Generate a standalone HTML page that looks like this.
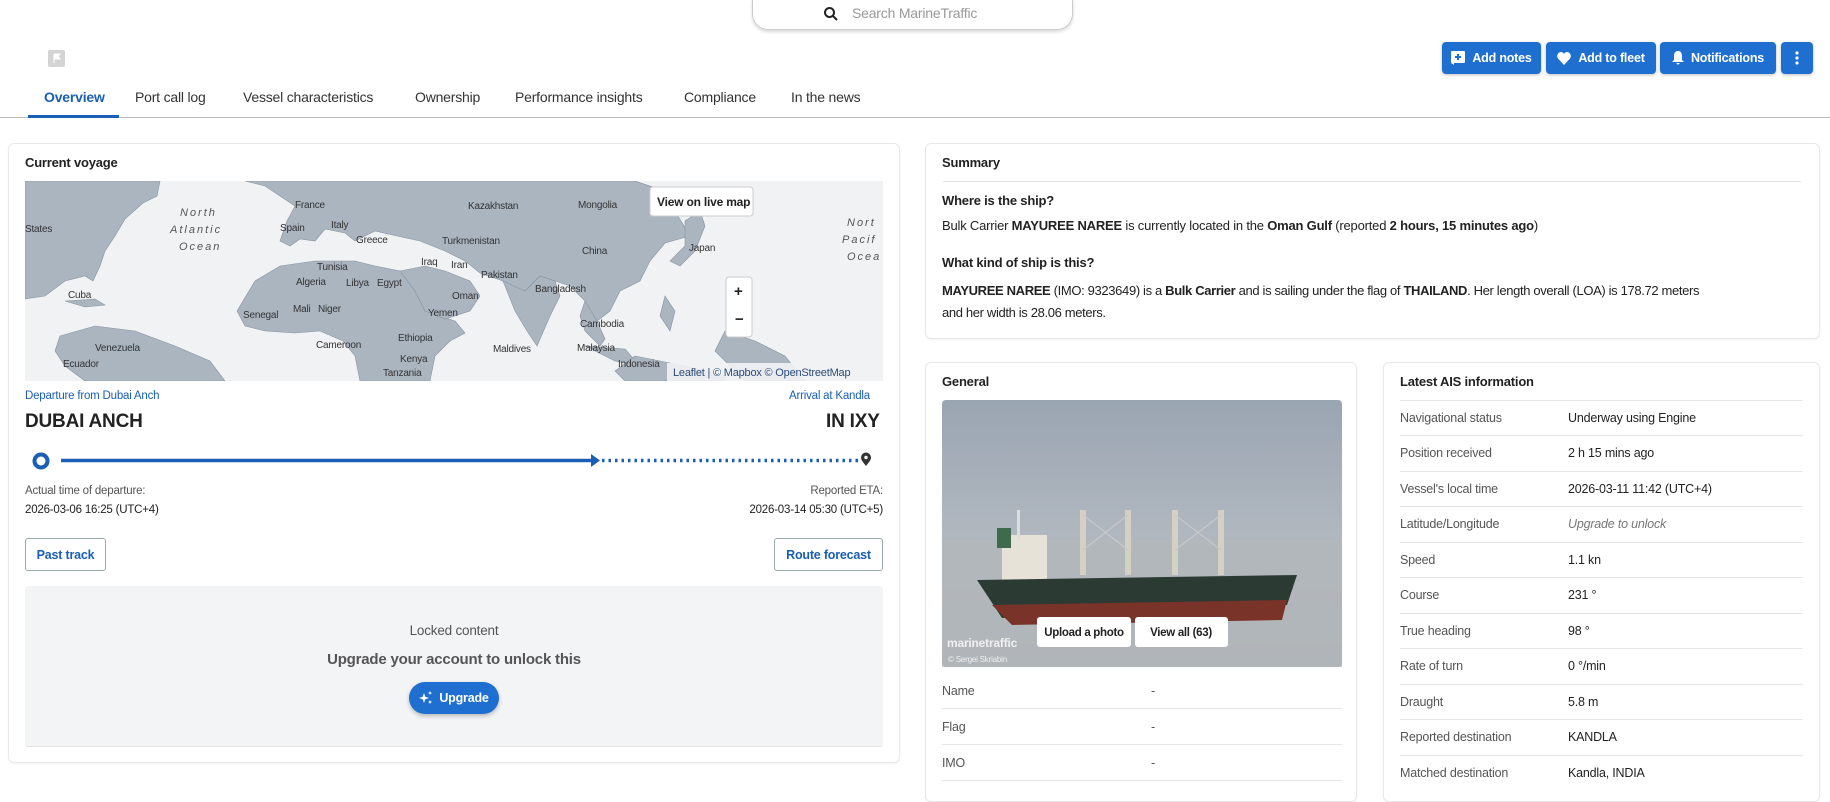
<!DOCTYPE html>
<html><head><meta charset="utf-8"><style>
*{box-sizing:border-box;margin:0;padding:0}
body{width:1830px;height:789px;overflow:hidden;background:#fff;font-family:"Liberation Sans",Arial,sans-serif;color:#222;position:relative;font-size:13px;letter-spacing:-0.2px}
.a{position:absolute}
.search{left:752px;top:-2px;width:321px;height:32px;border:1px solid #ccc;border-top:none;border-radius:0 0 16px 16px;box-shadow:0 2px 3px rgba(0,0,0,.15)}
.btn{position:absolute;top:42px;height:32px;background:#1f6fd1;border-radius:4px;color:#fff;font-weight:bold;font-size:12.5px;display:flex;align-items:center;justify-content:center;gap:7px;box-shadow:0 1px 3px rgba(0,0,0,.25)}
.tab{position:absolute;top:89px;font-size:14px;color:#333}
.card{position:absolute;border:1px solid #e8e8e8;border-radius:6px;box-shadow:0 1px 2px rgba(0,0,0,.05)}
.h{font-weight:bold;font-size:13px;color:#222}
.row{position:absolute;left:1400px;width:403px;height:36px;border-top:1px solid #e6e6e6;font-size:12.5px}
.row span{position:absolute;top:10px}
.row .l{left:0;color:#555}.row .v{left:168px;color:#222}
.grow{position:absolute;left:942px;width:400px;height:36px;border-bottom:1px solid #e6e6e6;font-size:12.5px;color:#555}
.ob{position:absolute;border:1px solid #9aa;border-radius:3px;background:#fff;color:#1a5fb4;font-weight:bold;font-size:12.5px;display:flex;align-items:center;justify-content:center}
</style></head><body>
<div class="a search"></div>
<svg class="a" style="left:823px;top:6px" width="16" height="16" viewBox="0 0 16 16"><circle cx="6.5" cy="6.5" r="4.5" fill="none" stroke="#222" stroke-width="2"/><path d="M10 10l4 4" stroke="#222" stroke-width="2"/></svg>
<div class="a" style="left:852px;top:5px;font-size:14px;color:#999">Search MarineTraffic</div>
<div class="a" style="left:48px;top:50px;width:17px;height:17px;background:#d4d4d4;border-radius:2px"></div>
<svg class="a" style="left:52px;top:53px" width="10" height="10"><path d="M2 1v9M2 1h6l-2 2.5 2 2.5H2" fill="#fff" stroke="#fff"/></svg>

<div class="btn" style="left:1442px;width:99px"><svg width="14" height="14"><rect x="0" y="0" width="14" height="12" rx="1" fill="#fff"/><path d="M0 12l3 2v-2" fill="#fff"/><path d="M7 3v6M4 6h6" stroke="#1f6fd1" stroke-width="2"/></svg>Add notes</div>
<div class="btn" style="left:1546px;width:110px"><svg width="14" height="13" viewBox="0 0 14 13"><path d="M7 13L1 6.5C-1 4 1 0 4 0c1.5 0 2.5 1 3 2 .5-1 1.5-2 3-2 3 0 5 4 3 6.5z" fill="#fff"/></svg>Add to fleet</div>
<div class="btn" style="left:1660px;width:116px"><svg width="12" height="14" viewBox="0 0 12 14"><path d="M6 0c3 0 4 2.5 4 5v4l2 2H0l2-2V5c0-2.5 1-5 4-5zM4.5 12h3a1.5 1.5 0 01-3 0z" fill="#fff"/></svg>Notifications</div>
<div class="btn" style="left:1781px;width:32px"><svg width="4" height="14"><circle cx="2" cy="2" r="1.6" fill="#fff"/><circle cx="2" cy="7" r="1.6" fill="#fff"/><circle cx="2" cy="12" r="1.6" fill="#fff"/></svg></div>

<div class="tab" style="left:44px;color:#1a5fb4;font-weight:bold">Overview</div>
<div class="tab" style="left:135px">Port call log</div>
<div class="tab" style="left:243px">Vessel characteristics</div>
<div class="tab" style="left:415px">Ownership</div>
<div class="tab" style="left:515px">Performance insights</div>
<div class="tab" style="left:684px">Compliance</div>
<div class="tab" style="left:791px">In the news</div>
<div class="a" style="left:0;top:117px;width:1830px;height:1px;background:#bbb"></div>
<div class="a" style="left:28px;top:115px;width:91px;height:3px;background:#1a5fb4"></div>

<!-- Current voyage -->
<div class="card" style="left:8px;top:143px;width:892px;height:620px"></div>
<div class="a h" style="left:25px;top:155px">Current voyage</div>
<svg class="a" style="left:25px;top:181px" width="858" height="200" viewBox="0 0 858 200">
<rect width="858" height="200" fill="#f1f2f4"/>
<g fill="#aab5c0" stroke="#8794a0" stroke-width=".6">
<path d="M0 0 L135 0 L132 15 L118 22 L100 38 L90 55 L80 70 L75 85 L68 100 L60 95 L40 100 L20 115 L0 118Z"/>
<path d="M40 120 L70 118 L80 124 L60 126Z"/>
<path d="M35 155 L70 145 L110 150 L150 165 L185 180 L200 200 L60 200 L40 185 L30 170Z"/>
<path d="M220 0 L610 0 L640 10 L650 30 L665 55 L640 62 L625 80 L615 100 L595 110 L585 130 L572 140 L560 120 L545 105 L530 100 L515 95 L500 110 L488 112 L478 100 L455 92 L440 80 L420 70 L395 60 L372 55 L350 50 L330 60 L320 52 L300 48 L290 60 L275 58 L265 65 L255 60 L262 40 L270 25 L255 15 L240 5Z"/>
<path d="M212 130 L230 100 L255 85 L290 80 L330 80 L350 85 L375 90 L390 110 L400 130 L430 140 L440 152 L425 160 L410 175 L405 200 L335 200 L330 175 L318 160 L295 150 L270 152 L240 150 L220 145Z"/>
<path d="M375 90 L400 85 L420 90 L445 100 L455 115 L445 130 L420 138 L400 130 L390 110Z"/>
<path d="M478 100 L500 110 L515 95 L530 100 L535 115 L525 135 L512 165 L502 150 L490 130Z"/>
<path d="M560 120 L572 140 L580 158 L575 165 L560 150 L555 135Z"/>
<path d="M560 165 L600 168 L615 185 L590 180Z"/>
<path d="M610 175 L660 185 L700 195 L700 200 L600 200 L590 190Z"/>
<path d="M660 40 L675 30 L680 45 L670 70 L655 85 L645 80 L660 65Z"/>
<path d="M700 150 L730 160 L760 175 L780 200 L720 200 L690 170Z"/>
<path d="M640 115 L650 130 L645 150 L635 135Z"/>
</g>
<g fill="#fff" stroke="#ccc"><rect x="625" y="6" width="103" height="29" rx="3"/><rect x="701" y="96" width="26" height="60" rx="3"/></g>
<text x="632" y="25" font-size="12" font-weight="bold" fill="#222" font-family="Liberation Sans">View on live map</text>
<text x="709" y="115" font-size="15" font-weight="bold" fill="#222">+</text><text x="710" y="143" font-size="15" font-weight="bold" fill="#222">−</text>
<rect x="642" y="182" width="216" height="18" fill="#f1f2f4" opacity=".9"/>
<text x="648" y="195" font-size="11" fill="#2b4a7a" font-family="Liberation Sans">Leaflet | © Mapbox © OpenStreetMap</text>
<g font-size="10" fill="#333" font-family="Liberation Sans">
<text x="270" y="27">France</text><text x="443" y="28">Kazakhstan</text><text x="553" y="27">Mongolia</text><text x="255" y="50">Spain</text><text x="306" y="47">Italy</text><text x="331" y="62">Greece</text><text x="417" y="63">Turkmenistan</text><text x="557" y="73">China</text><text x="664" y="70">Japan</text><text x="292" y="89">Tunisia</text><text x="396" y="84">Iraq</text><text x="426" y="87">Iran</text><text x="456" y="97">Pakistan</text><text x="271" y="104">Algeria</text><text x="321" y="105">Libya</text><text x="352" y="105">Egypt</text><text x="510" y="111">Bangladesh</text><text x="427" y="118">Oman</text><text x="43" y="117">Cuba</text><text x="403" y="135">Yemen</text><text x="218" y="137">Senegal</text><text x="268" y="131">Mali</text><text x="293" y="131">Niger</text><text x="555" y="146">Cambodia</text><text x="373" y="160">Ethiopia</text><text x="70" y="170">Venezuela</text><text x="291" y="167">Cameroon</text><text x="468" y="171">Maldives</text><text x="552" y="170">Malaysia</text><text x="375" y="181">Kenya</text><text x="38" y="186">Ecuador</text><text x="593" y="186">Indonesia</text><text x="0" y="51">States</text><text x="358" y="195">Tanzania</text>
</g>
<g font-size="11" fill="#555" font-style="italic" font-family="Liberation Sans" letter-spacing="2"><text x="155" y="35">North</text><text x="145" y="52">Atlantic</text><text x="154" y="69">Ocean</text><text x="822" y="45">Nort</text><text x="817" y="62">Pacif</text><text x="822" y="79">Ocea</text></g>
</svg>
<div class="a" style="left:25px;top:390px;font-size:11.5px;color:#1a5fb4">Departure from Dubai Anch</div>
<div class="a" style="left:789px;top:390px;font-size:11.5px;color:#1a5fb4">Arrival at Kandla</div>
<div class="a" style="left:25px;top:411px;font-size:19px;font-weight:bold;color:#222">DUBAI ANCH</div>
<div class="a" style="left:826px;top:411px;font-size:19px;font-weight:bold;color:#222">IN IXY</div>
<svg class="a" style="left:30px;top:448px" width="850" height="24">
<circle cx="11" cy="13" r="6.5" fill="none" stroke="#1a5fb4" stroke-width="4"/>
<path d="M31 12.5H562" stroke="#1a5fb4" stroke-width="3.5"/>
<path d="M561 6l9 6.5-9 6.5z" fill="#1a5fb4"/>
<path d="M572 12.5H828" stroke="#1a5fb4" stroke-width="3.5" stroke-dasharray="2.5 4"/>
<path d="M836 18c-3-4-5-6-5-8.5a5 5 0 0110 0c0 2.5-2 4.5-5 8.5z" fill="#333"/><circle cx="836" cy="9.5" r="1.7" fill="#fff"/>
</svg>
<div class="a" style="left:25px;top:485px;font-size:11.5px;color:#555">Actual time of departure:</div>
<div class="a" style="left:25px;top:504px;font-size:11.5px;color:#222">2026-03-06 16:25 (UTC+4)</div>
<div class="a" style="left:805px;top:485px;font-size:11.5px;color:#555;width:78px;text-align:right">Reported ETA:</div>
<div class="a" style="left:683px;top:504px;font-size:11.5px;color:#222;width:200px;text-align:right">2026-03-14 05:30 (UTC+5)</div>
<div class="ob" style="left:25px;top:538px;width:81px;height:33px">Past track</div>
<div class="ob" style="left:774px;top:538px;width:109px;height:33px">Route forecast</div>
<div class="a" style="left:25px;top:586px;width:858px;height:161px;background:#f3f4f6;border-radius:3px;border-bottom:1px solid #e3e3e3"></div>
<div class="a" style="left:25px;top:623px;width:858px;text-align:center;font-size:13.5px;color:#555">Locked content</div>
<div class="a" style="left:25px;top:651px;width:858px;text-align:center;font-size:15px;font-weight:bold;color:#555">Upgrade your account to unlock this</div>
<div class="a" style="left:409px;top:682px;width:90px;height:32px;border-radius:16px;background:#1f6fd1;color:#fff;font-weight:bold;font-size:12.5px;display:flex;align-items:center;justify-content:center;gap:6px;box-shadow:0 2px 4px rgba(0,0,0,.25)"><svg width="14" height="14"><path d="M5 2l1.3 3.7L10 7 6.3 8.3 5 12 3.7 8.3 0 7l3.7-1.3z M11 0l.6 1.4L13 2l-1.4.6L11 4l-.6-1.4L9 2l1.4-.6z M11 9l.6 1.4L13 11l-1.4.6L11 13l-.6-1.4L9 11l1.4-.6z" fill="#fff"/></svg>Upgrade</div>

<!-- Summary -->
<div class="card" style="left:925px;top:143px;width:895px;height:196px"></div>
<div class="a h" style="left:942px;top:155px">Summary</div>
<div class="a" style="left:943px;top:181px;width:858px;height:1px;background:#e6e6e6"></div>
<div class="a h" style="left:942px;top:193px">Where is the ship?</div>
<div class="a" style="left:942px;top:218px;font-size:13px">Bulk Carrier <b>MAYUREE NAREE</b> is currently located in the <b>Oman Gulf</b> (reported <b>2 hours, 15 minutes ago</b>)</div>
<div class="a h" style="left:942px;top:255px">What kind of ship is this?</div>
<div class="a" style="left:942px;top:280px;width:866px;font-size:13px;line-height:22px;letter-spacing:-0.35px"><b>MAYUREE NAREE</b> (IMO: 9323649) is a <b>Bulk Carrier</b> and is sailing under the flag of <b>THAILAND</b>. Her length overall (LOA) is 178.72 meters<br>and her width is 28.06 meters.</div>

<!-- General -->
<div class="card" style="left:925px;top:362px;width:432px;height:440px"></div>
<div class="a h" style="left:942px;top:374px">General</div>
<svg class="a" style="left:942px;top:400px" width="400" height="267" viewBox="0 0 400 267">
<defs><linearGradient id="sk" x1="0" y1="0" x2="0" y2="1"><stop offset="0" stop-color="#9aa5b2"/><stop offset=".5" stop-color="#b0b7bf"/><stop offset="1" stop-color="#a9afb4"/></linearGradient></defs>
<rect width="400" height="267" rx="4" fill="url(#sk)"/>
<rect y="140" width="400" height="127" fill="#b3b8bb" opacity=".7"/>
<rect x="60" y="135" width="45" height="45" fill="#e6e2d8"/><rect x="55" y="128" width="14" height="20" fill="#3f6a4c"/><rect x="75" y="110" width="3" height="30" fill="#ddd"/>
<g fill="#d5cfc4"><rect x="138" y="110" width="6" height="65"/><rect x="183" y="110" width="6" height="65"/><rect x="230" y="110" width="6" height="65"/><rect x="276" y="110" width="6" height="65"/></g>
<g stroke="#c8c8c8" stroke-width="1.2"><path d="M141 115L186 150M186 115L141 150M233 115L279 150M279 115L233 150"/></g>
<path d="M35 180 L355 175 L345 205 L60 218 Z" fill="#2c3a34"/>
<path d="M50 205 L345 200 L340 220 L70 225 Z" fill="#7a3328"/>
<text x="5" y="247" font-size="12" fill="#f0f0f0" font-weight="bold" font-family="Liberation Sans">marinetraffic</text>
<text x="6" y="262" font-size="8" fill="#eee" font-family="Liberation Sans">© Sergei Skriabin</text>
<rect x="95" y="217" width="94" height="30" rx="3" fill="#fff"/><rect x="193" y="217" width="93" height="30" rx="3" fill="#fff"/>
<text x="142" y="236" text-anchor="middle" font-size="11.5" font-weight="bold" fill="#222" font-family="Liberation Sans" letter-spacing="-0.3">Upload a photo</text>
<text x="239" y="236" text-anchor="middle" font-size="11.5" font-weight="bold" fill="#222" font-family="Liberation Sans" letter-spacing="-0.3">View all (63)</text>
</svg>
<div class="grow" style="top:673px"><span class="a" style="top:11px">Name</span><span class="a" style="left:209px;top:11px">-</span></div>
<div class="grow" style="top:709px"><span class="a" style="top:11px">Flag</span><span class="a" style="left:209px;top:11px">-</span></div>
<div class="grow" style="top:745px"><span class="a" style="top:11px">IMO</span><span class="a" style="left:209px;top:11px">-</span></div>

<!-- AIS -->
<div class="card" style="left:1383px;top:362px;width:437px;height:440px"></div>
<div class="a h" style="left:1400px;top:374px">Latest AIS information</div>
<div class="row" style="top:400px"><span class="l">Navigational status</span><span class="v">Underway using Engine</span></div>
<div class="row" style="top:435px"><span class="l">Position received</span><span class="v">2 h 15 mins ago</span></div>
<div class="row" style="top:471px"><span class="l">Vessel's local time</span><span class="v">2026-03-11 11:42 (UTC+4)</span></div>
<div class="row" style="top:506px"><span class="l">Latitude/Longitude</span><span class="v" style="color:#777;font-style:italic">Upgrade to unlock</span></div>
<div class="row" style="top:542px"><span class="l">Speed</span><span class="v">1.1 kn</span></div>
<div class="row" style="top:577px"><span class="l">Course</span><span class="v">231 °</span></div>
<div class="row" style="top:613px"><span class="l">True heading</span><span class="v">98 °</span></div>
<div class="row" style="top:648px"><span class="l">Rate of turn</span><span class="v">0 °/min</span></div>
<div class="row" style="top:684px"><span class="l">Draught</span><span class="v">5.8 m</span></div>
<div class="row" style="top:719px"><span class="l">Reported destination</span><span class="v">KANDLA</span></div>
<div class="row" style="top:755px"><span class="l">Matched destination</span><span class="v">Kandla, INDIA</span></div>
</body></html>
